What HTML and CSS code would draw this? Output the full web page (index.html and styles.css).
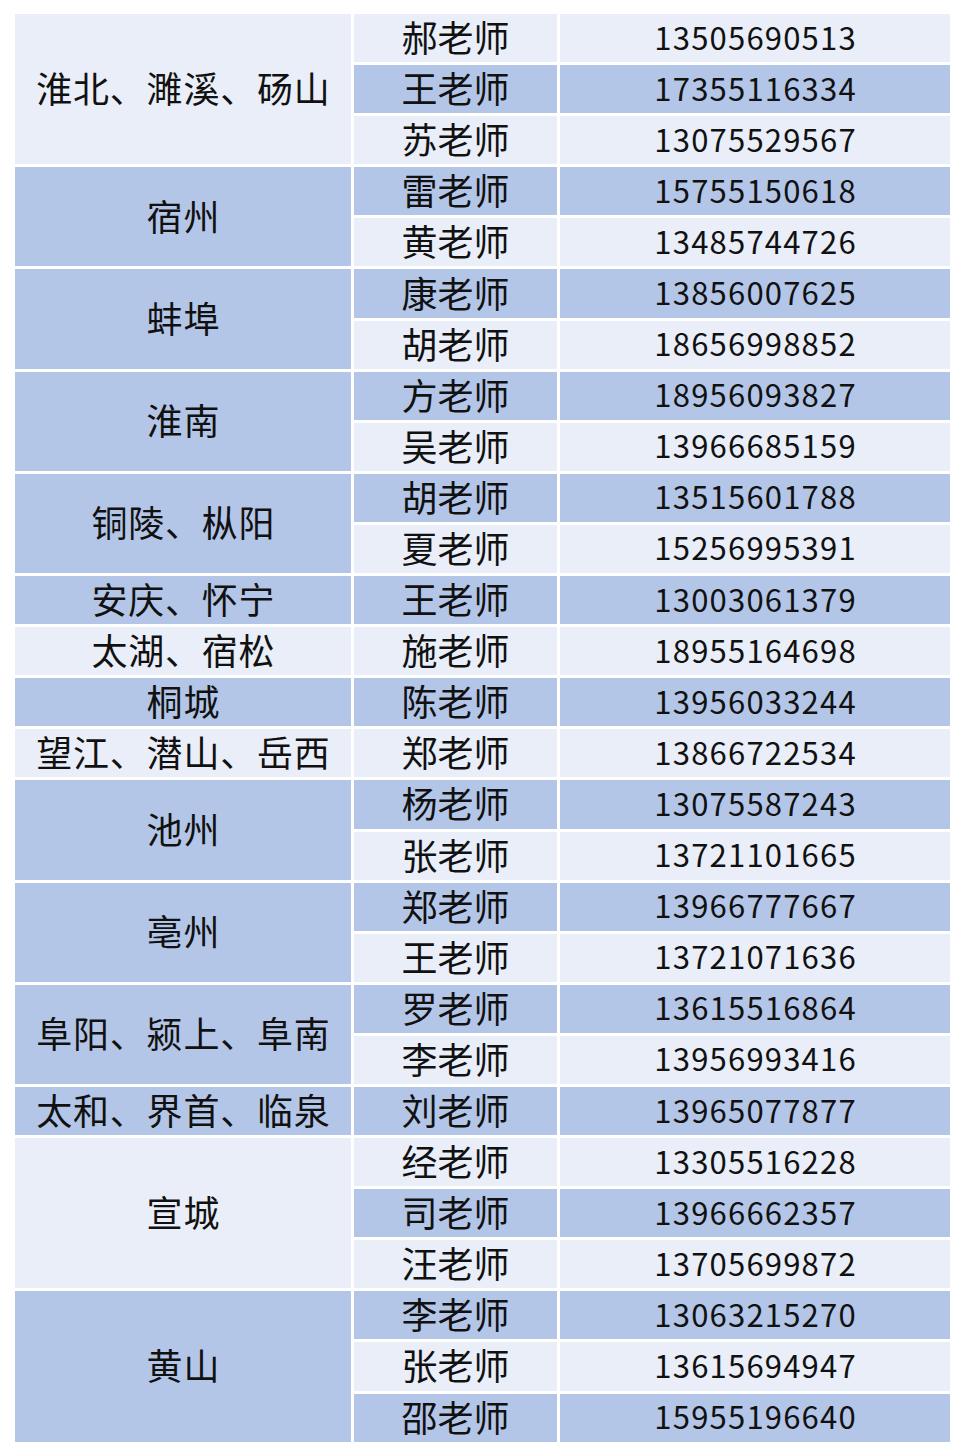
FILE: index.html
```html
<!DOCTYPE html>
<html lang="zh-CN">
<head>
<meta charset="utf-8">
<title>联系表</title>
<link rel="stylesheet" href="styles.css">
</head>
<body>
<div class="table">
  <div class="cell region light span3">淮北、濉溪、砀山</div>
  <div class="cell name light">郝老师</div><div class="cell phone light">13505690513</div>
  <div class="cell name dark">王老师</div><div class="cell phone dark">17355116334</div>
  <div class="cell name light">苏老师</div><div class="cell phone light">13075529567</div>

  <div class="cell region dark span2">宿州</div>
  <div class="cell name dark">雷老师</div><div class="cell phone dark">15755150618</div>
  <div class="cell name light">黄老师</div><div class="cell phone light">13485744726</div>

  <div class="cell region dark span2">蚌埠</div>
  <div class="cell name dark">康老师</div><div class="cell phone dark">13856007625</div>
  <div class="cell name light">胡老师</div><div class="cell phone light">18656998852</div>

  <div class="cell region dark span2">淮南</div>
  <div class="cell name dark">方老师</div><div class="cell phone dark">18956093827</div>
  <div class="cell name light">吴老师</div><div class="cell phone light">13966685159</div>

  <div class="cell region dark span2">铜陵、枞阳</div>
  <div class="cell name dark">胡老师</div><div class="cell phone dark">13515601788</div>
  <div class="cell name light">夏老师</div><div class="cell phone light">15256995391</div>

  <div class="cell region dark">安庆、怀宁</div>
  <div class="cell name dark">王老师</div><div class="cell phone dark">13003061379</div>

  <div class="cell region light">太湖、宿松</div>
  <div class="cell name light">施老师</div><div class="cell phone light">18955164698</div>

  <div class="cell region dark">桐城</div>
  <div class="cell name dark">陈老师</div><div class="cell phone dark">13956033244</div>

  <div class="cell region light">望江、潜山、岳西</div>
  <div class="cell name light">郑老师</div><div class="cell phone light">13866722534</div>

  <div class="cell region dark span2">池州</div>
  <div class="cell name dark">杨老师</div><div class="cell phone dark">13075587243</div>
  <div class="cell name light">张老师</div><div class="cell phone light">13721101665</div>

  <div class="cell region dark span2">亳州</div>
  <div class="cell name dark">郑老师</div><div class="cell phone dark">13966777667</div>
  <div class="cell name light">王老师</div><div class="cell phone light">13721071636</div>

  <div class="cell region dark span2">阜阳、颍上、阜南</div>
  <div class="cell name dark">罗老师</div><div class="cell phone dark">13615516864</div>
  <div class="cell name light">李老师</div><div class="cell phone light">13956993416</div>

  <div class="cell region dark">太和、界首、临泉</div>
  <div class="cell name dark">刘老师</div><div class="cell phone dark">13965077877</div>

  <div class="cell region light span3">宣城</div>
  <div class="cell name light">经老师</div><div class="cell phone light">13305516228</div>
  <div class="cell name dark">司老师</div><div class="cell phone dark">13966662357</div>
  <div class="cell name light">汪老师</div><div class="cell phone light">13705699872</div>

  <div class="cell region dark span3">黄山</div>
  <div class="cell name dark">李老师</div><div class="cell phone dark">13063215270</div>
  <div class="cell name light">张老师</div><div class="cell phone light">13615694947</div>
  <div class="cell name dark">邵老师</div><div class="cell phone dark">15955196640</div>
</div>
</body>
</html>
```
FILE: styles.css
```css
html, body {
  margin: 0;
  padding: 0;
  background: #ffffff;
}

body {
  font-family: "Noto Sans CJK SC", "Noto Sans", sans-serif;
  color: #111111;
}

.table {
  display: grid;
  grid-template-columns: 336px 203px 390px;
  grid-auto-rows: 48.1px;
  column-gap: 3px;
  row-gap: 3px;
  margin: 14px 0 0 15px;
  width: 935px;
}

.cell {
  display: flex;
  align-items: center;
  justify-content: center;
  font-size: 36px;
  line-height: 1;
  white-space: nowrap;
  padding-bottom: 4px;
  box-sizing: border-box;
}

.light { background: #e9eef8; }
.dark { background: #b4c6e7; }

.region {
  grid-column: 1;
  letter-spacing: 0.8px;
  text-indent: 0.8px;
}
.name { grid-column: 2; }
.phone {
  grid-column: 3;
  font-size: 31px;
  letter-spacing: 1.2px;
  text-indent: 1.2px;
}

.span2 { grid-row: span 2; }
.span3 { grid-row: span 3; }
```
